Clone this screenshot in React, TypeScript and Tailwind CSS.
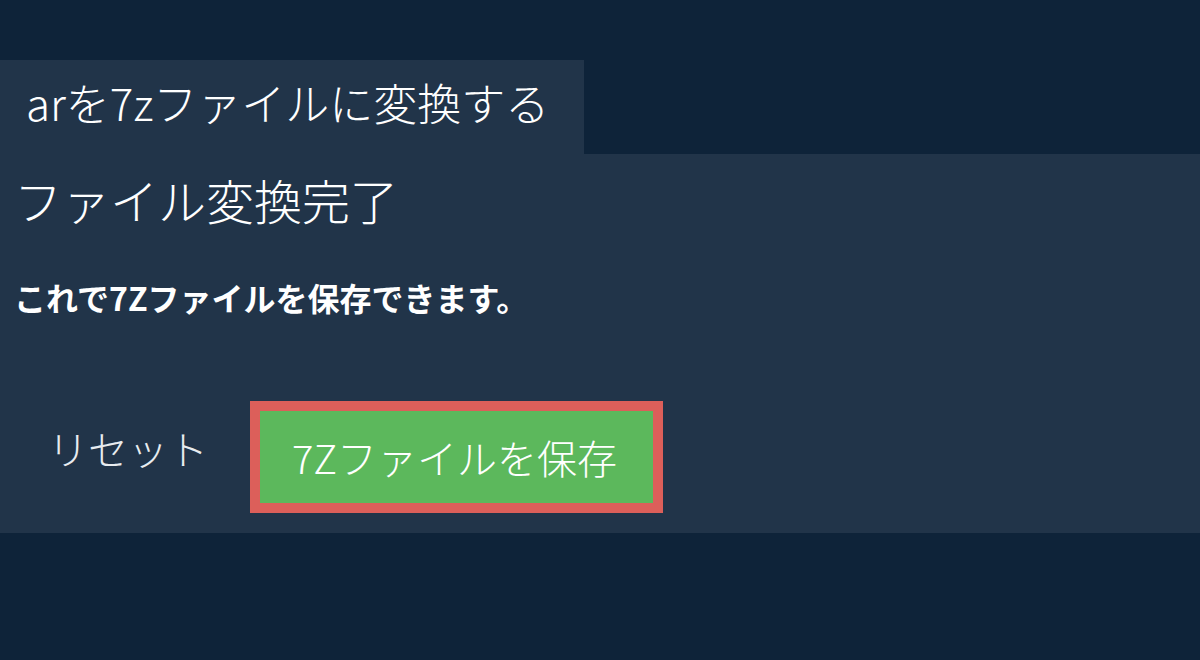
import React from 'react'

const font = "font-['Noto_Sans_CJK_JP','Noto_Sans',sans-serif]"

const App = () => {
  return (
    <div className={`min-h-[660px] bg-[#0e2339] pt-[60px] text-white ${font}`}>
      <div className="flex h-[94px] w-[584px] items-center bg-[#213449] pb-[10px] pl-[26px]">
        <h1 className="text-[44px] font-light leading-none">arを7zファイルに変換する</h1>
      </div>
      <div className="h-[379px] bg-[#213449] pl-[14px]">
        <h2 className="pt-[15px] text-[48px] font-light leading-[60px]">ファイル変換完了</h2>
        <p className="mt-[52px] text-[32px] font-semibold leading-[32px]">
          これで7Zファイルを保存できます。
        </p>
        <div className="mt-[88px] flex items-center">
          <button className="mb-[18px] ml-[34px] mr-[42px] text-[40px] font-light leading-none text-[#e8ecf0]">
            リセット
          </button>
          <button className="flex h-[112px] w-[413px] items-center justify-center border-[10px] border-[#dc5f5a] bg-[#5cb85c] pr-[4px] text-[40px] font-light leading-none">
            7Zファイルを保存
          </button>
        </div>
      </div>
    </div>
  )
}

export default App
